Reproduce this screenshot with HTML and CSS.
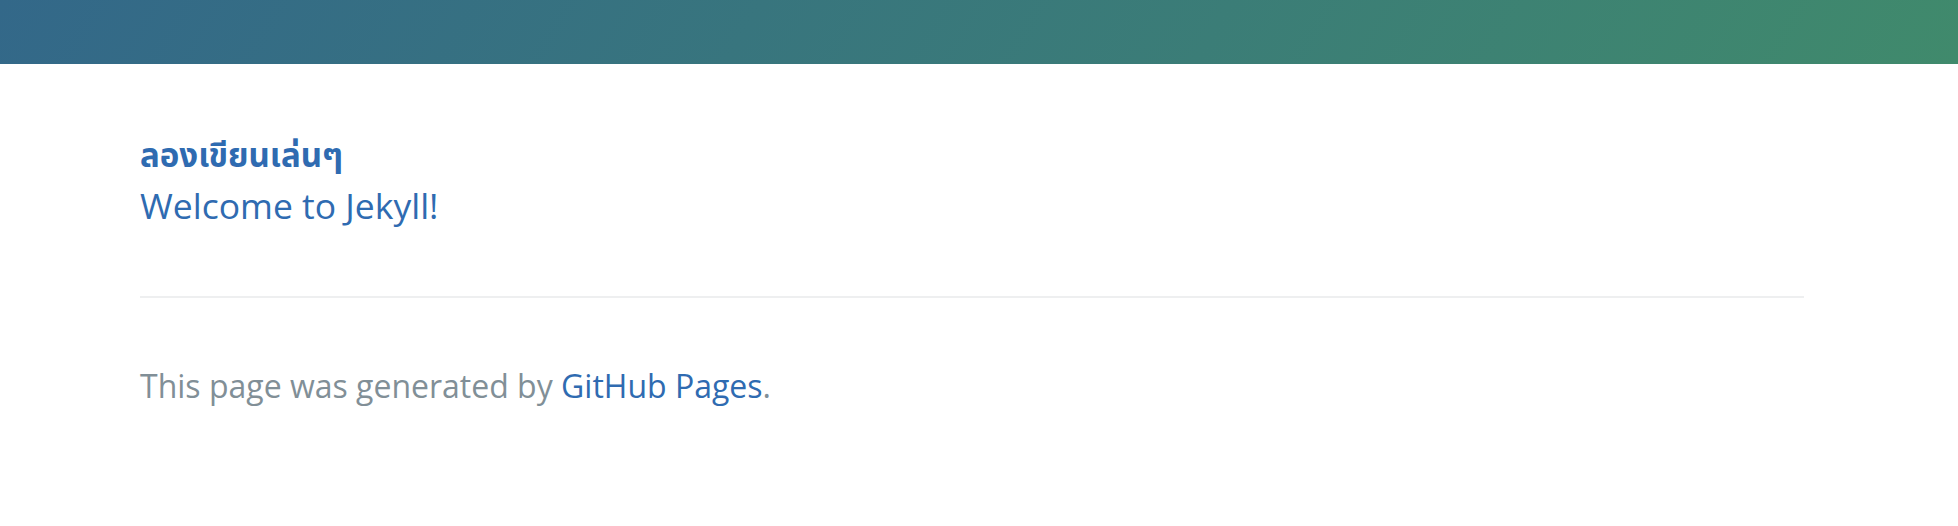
FILE: index.html
```html
<!DOCTYPE html>
<html lang="th">
<head>
<meta charset="utf-8">
<title>ลองเขียนเล่นๆ</title>
<link rel="stylesheet" href="styles.css">
</head>
<body>
<header class="page-header"></header>
<main class="main-content">
  <h2 class="site-title">ลองเขียนเล่นๆ</h2>
  <a class="post-link" href="#">Welcome to Jekyll!</a>
  <footer class="site-footer">
    <span class="site-footer-credits">This page was generated by <a href="#">GitHub Pages</a>.</span>
  </footer>
</main>
</body>
</html>
```

FILE: styles.css
```css
* { box-sizing: border-box; }
html, body { margin: 0; padding: 0; }
body {
  font-family: "Open Sans", "Noto Sans", "Noto Sans Thai", "DejaVu Sans", sans-serif;
  background: #ffffff;
  color: #606c71;
}
.page-header {
  height: 64px;
  background-color: #3c7f74;
  background-image: linear-gradient(120deg, #336889, #408a6c);
}
.main-content {
  padding: 68px 154px 0 140px;
}
.site-title {
  margin: 0;
  font-size: 33px;
  line-height: 45px;
  font-weight: 700;
  color: #2f6bb1;
}
.post-link {
  display: block;
  margin-top: 2px;
  font-size: 35.5px;
  line-height: 52px;
  color: #2f6bb1;
  text-decoration: none;
}
.site-footer {
  margin-top: 65px;
  padding-top: 64px;
  border-top: 2px solid #eeeff0;
  font-size: 32px;
  line-height: 48px;
}
.site-footer-credits { color: #818f97; }
.site-footer a { color: #2f6bb1; text-decoration: none; }
```
